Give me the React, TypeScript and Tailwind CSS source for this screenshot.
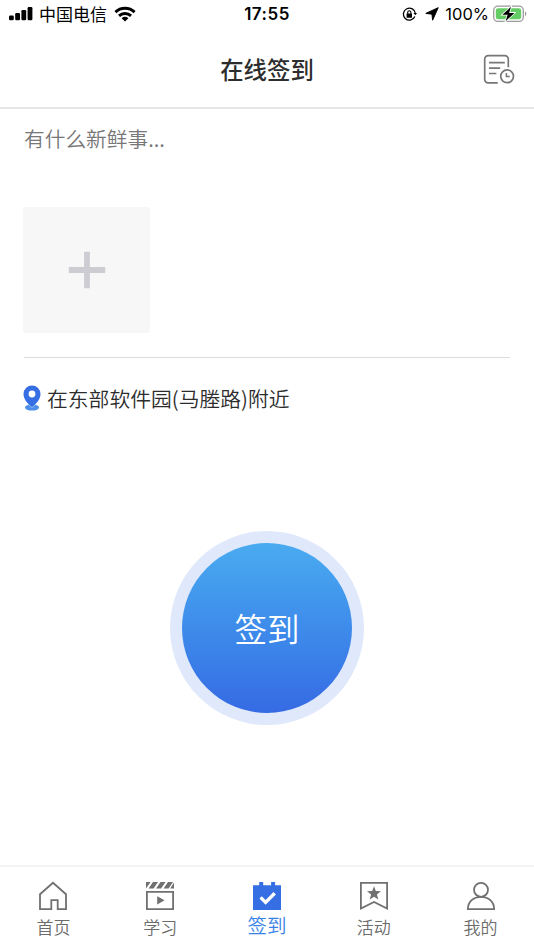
import type { ReactNode } from 'react'
import clsx from 'clsx'

interface Tab {
  label: string
  icon: ReactNode
  active?: boolean
}

function HomeIcon() {
  return (
    <svg width="30" height="30" viewBox="0 0 30 30" fill="none" stroke="#707070" strokeWidth="1.8">
      <path d="M2 13.2 15 1.8l13 11.4v14.9h-8.3v-9h-6.4v9H2z" />
    </svg>
  )
}

function StudyIcon() {
  return (
    <svg width="30" height="30" viewBox="0 0 30 30" fill="#707070">
      <path d="M1 1h4.6L1 7.4zM8 1h5L8.6 7.4h-5zM15.5 1h5l-4.4 6.4h-5zM23 1h5l-4.4 6.4h-5zM29 1.6v5.8h-3.8z" />
      <path d="M1.9 10.9h26.2v17.2H1.9z" fill="none" stroke="#707070" strokeWidth="1.8" />
      <path d="M12.2 15.2 19.6 19.3l-7.4 4.1z" />
    </svg>
  )
}

function CheckInIcon() {
  return (
    <svg width="30" height="30" viewBox="0 0 30 30">
      <path d="M1 4.2h6.2V1h4v3.2h7.9V1h4v3.2H29V29H1z" fill="#366ee3" />
      <path d="m8.6 16.4 5 5 9.1-9.1" fill="none" stroke="#fff" strokeWidth="3.4" />
    </svg>
  )
}

function ActivityIcon() {
  return (
    <svg width="30" height="30" viewBox="0 0 30 30">
      <path d="M1.9 1.9h26.2v25.6L15 21 1.9 27.5z" fill="none" stroke="#707070" strokeWidth="1.8" />
      <path d="m15 5.2 1.8 4.9 5.2.2-4.1 3.2 1.4 5-4.3-2.8-4.3 2.8 1.4-5L8 10.3l5.2-.2z" fill="#707070" />
    </svg>
  )
}

function MineIcon() {
  return (
    <svg width="30" height="30" viewBox="0 0 30 30" fill="none" stroke="#707070" strokeWidth="1.8">
      <circle cx="15" cy="8.8" r="7" />
      <path d="M1.9 28.1c0-7.5 5.6-12.3 13.1-12.3s13.1 4.8 13.1 12.3z" />
    </svg>
  )
}

const tabs: Tab[] = [
  { label: '首页', icon: <HomeIcon /> },
  { label: '学习', icon: <StudyIcon /> },
  { label: '签到', icon: <CheckInIcon />, active: true },
  { label: '活动', icon: <ActivityIcon /> },
  { label: '我的', icon: <MineIcon /> },
]

function StatusBar() {
  return (
    <div className="grid h-7 grid-cols-[1fr_auto_1fr] items-center px-2 text-black">
      <div className="ml-px flex items-center">
        <svg width="24" height="14" viewBox="0 0 24 14">
          <rect x="0" y="8.6" width="4.8" height="4.6" rx="1.2" />
          <rect x="6.2" y="6" width="4.8" height="7.2" rx="1.2" />
          <rect x="12.4" y="3" width="4.8" height="10.2" rx="1.2" />
          <rect x="18.6" y="0" width="4.8" height="13.2" rx="1.2" />
        </svg>
        <span className="ml-[6px] text-[17px] leading-7">中国电信</span>
        <svg className="ml-[7px]" width="22" height="16" viewBox="0 0 22 16" fill="none" stroke="#000" strokeWidth="2.9">
          <path d="M1.4 6.1a13.8 13.8 0 0 1 19.2 0" />
          <path d="M5 9.9a8.7 8.7 0 0 1 12 0" />
          <path d="M11 15.6 7.6 12.2a4.9 4.9 0 0 1 6.8 0z" fill="#000" stroke="none" />
        </svg>
      </div>
      <span className="pt-0.5 font-[Inter] text-[17px] font-semibold tracking-[0.5px]">17:55</span>
      <div className="-mr-px flex items-center justify-end">
        <svg width="15" height="15" viewBox="0 0 15 15" fill="none" stroke="#000" strokeWidth="1.3">
          <path d="M12.9 9.6a6 6 0 1 1 .5-3.1" />
          <path d="m11.4 6 2 2.2L15 6z" fill="#000" stroke="none" />
          <rect x="4.6" y="6.6" width="5.4" height="4.2" rx=".6" fill="#000" stroke="none" />
          <path d="M5.7 7V5.4a1.6 1.6 0 0 1 3.2 0V7" strokeWidth="1.1" />
        </svg>
        <svg className="ml-[8px]" width="14" height="14" viewBox="0 0 14 14">
          <path d="M13.2.7 7.6 13.2 7 7.2.8 6.4z" stroke="#000" strokeWidth="1" strokeLinejoin="round" />
        </svg>
        <span className="ml-[6px] font-[Inter] text-[16.5px] leading-7">100%</span>
        <svg className="ml-[4px]" width="34" height="18" viewBox="0 0 34 18">
          <rect x=".7" y="1.2" width="29.6" height="15.2" rx="4.2" fill="#fff" stroke="#9b9b9b" strokeWidth="1.3" />
          <rect x="2.8" y="3.3" width="25.4" height="11" rx="2.4" fill="#65cd66" />
          <path d="M32 6.3c1.8.7 1.8 4.3 0 5z" fill="#9b9b9b" />
          <path d="M18 1.8 9.4 9.8h5.2l-2 6.4 8.8-8.3h-5.3z" stroke="#fff" strokeWidth="1.6" paintOrder="stroke" />
        </svg>
      </div>
    </div>
  )
}

function Header() {
  return (
    <header className="grid h-[81px] grid-cols-[1fr_auto_1fr] items-center border-b-2 border-[#e5e5e5] px-[19px]">
      <h1 className="col-start-2 pt-0.5 text-[23.4px] font-medium leading-8 text-[#2d2d2d]">在线签到</h1>
      <button className="mt-1 justify-self-end" aria-label="签到记录">
        <svg width="32" height="31" viewBox="0 0 32 31" fill="none" stroke="#777" strokeWidth="1.7">
          <path d="M14.8 28.9H5.2a3.5 3.5 0 0 1-3.5-3.5V5.2a3.5 3.5 0 0 1 3.5-3.5h16.6a3.5 3.5 0 0 1 3.5 3.5v8" />
          <path d="M6 8.6h15.8M6 14.1h11.2M6 19.5h7.4" />
          <circle cx="24.1" cy="22.3" r="6.4" />
          <path d="M23.4 18.9v3.7h3.4" strokeWidth="1.5" />
        </svg>
      </button>
    </header>
  )
}

function Composer() {
  return (
    <section className="mx-6 border-b border-[#dcdcdc] pb-6">
      <p className="pt-[13px] text-[20.7px] font-[350] leading-8 text-[#777]">有什么新鲜事...</p>
      <button className="-ml-px mt-[53px] flex h-[126px] w-[127px] items-center justify-center rounded-[2px] bg-[#f7f7f7]" aria-label="添加图片">
        <svg width="38" height="38" viewBox="0 0 38 38" fill="#cdccd3">
          <path d="M16.1.8h5.8v15.3h15.3v5.8H21.9v15.3h-5.8V21.9H.8v-5.8h15.3z" />
        </svg>
      </button>
    </section>
  )
}

function Location() {
  return (
    <div className="mt-6 flex h-8 items-center px-[23px]">
      <svg width="18" height="26" viewBox="0 0 18 26">
        <ellipse cx="9" cy="22.4" rx="7" ry="3.2" fill="#4b8fea" />
        <path
          d="M9 .5a8.5 8.5 0 0 1 8.5 8.5c0 5-3.6 9.2-8.5 13.3C4.1 18.2.5 14 .5 9A8.5 8.5 0 0 1 9 .5z"
          fill="#366ee3"
          stroke="#fff"
          strokeWidth="1"
          paintOrder="stroke"
        />
        <circle cx="9" cy="9" r="3.4" fill="#fff" />
      </svg>
      <span className="ml-[6px] text-[20.8px] font-[350] leading-8 text-[#2c2c2c]">在东部软件园(马塍路)附近</span>
    </div>
  )
}

function CheckInButton() {
  return (
    <button className="mx-auto mt-[117px] flex size-[194px] items-center justify-center rounded-full bg-[#e0e9fb]">
      <span className="flex size-[170px] items-center justify-center rounded-full bg-linear-to-b from-[#4aabf0] to-[#366ae4] text-[32.5px] font-[350] text-white">
        签到
      </span>
    </button>
  )
}

function TabBar() {
  return (
    <nav className="grid h-[85px] grid-cols-5 border-t-2 border-[#f3f3f3]">
      {tabs.map(({ label, icon, active }) => (
        <a key={label} className="flex flex-col items-center pt-[14px]">
          {icon}
          <span
            className={clsx(
              'font-[350] leading-6',
              active ? 'mt-[2px] text-[19.5px] text-[#3a83e6]' : 'mt-1 text-[17px] text-[#6c6c6c]',
            )}
          >
            {label}
          </span>
        </a>
      ))}
    </nav>
  )
}

export default function App() {
  return (
    <div className="flex h-screen flex-col overflow-hidden bg-white font-['Noto_Sans_CJK_SC',sans-serif]">
      <StatusBar />
      <Header />
      <main className="flex flex-1 flex-col">
        <Composer />
        <Location />
        <CheckInButton />
      </main>
      <TabBar />
    </div>
  )
}
